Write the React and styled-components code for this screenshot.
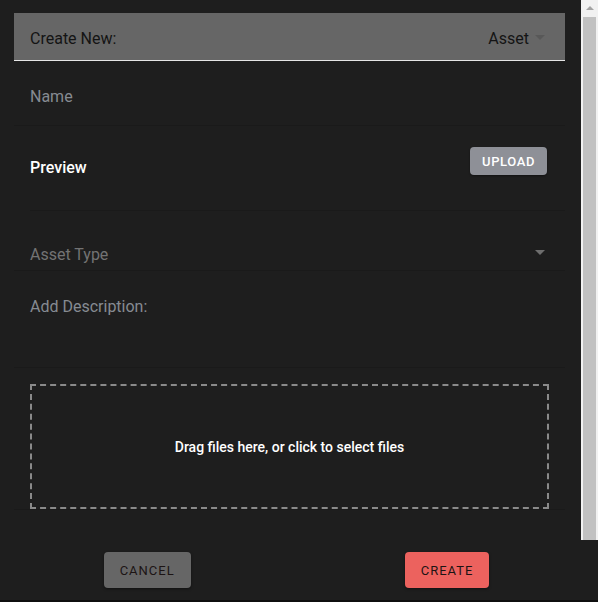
import React from 'react'
import styled, { createGlobalStyle } from 'styled-components'

const GlobalStyle = createGlobalStyle`
  html, body {
    margin: 0;
    padding: 0;
    background: #0f0f0f;
  }
  * { box-sizing: border-box; }
`

const Page = styled.div`
  width: 598px;
  height: 600px;
  display: flex;
  flex-direction: column;
  background: #1e1e1e;
  font-family: Roboto, "Liberation Sans", sans-serif;
`

const Body = styled.div`
  height: 540px;
  display: flex;
  overflow: hidden;
`

const Content = styled.div`
  width: 581px;
  padding: 13px 16px 0 14px;
`

// headless browser hides real scrollbars, so the bar is drawn by hand
const ScrollBar = styled.div`
  width: 17px;
  display: flex;
  flex-direction: column;
  background: #f1f1f1;
`

const ScrollUp = styled.div`
  height: 17px;
  display: flex;
  align-items: center;
  justify-content: center;
`

const ScrollArrow = styled.span`
  width: 0;
  height: 0;
  border-left: 4px solid transparent;
  border-right: 4px solid transparent;
  border-bottom: 4px solid #a3a3a3;
  margin-top: -1px;
`

const Thumb = styled.div`
  flex: 1;
  margin: 0 2px;
  background: #c1c1c1;
`

const Header = styled.div`
  height: 48px;
  padding: 4px 20px 0 16px;
  display: flex;
  align-items: center;
  justify-content: space-between;
  background: #666666;
  border-bottom: 1px solid #e6e6e6;
  font-size: 16px;
  color: #141414;
`

const Picker = styled.div`
  display: flex;
  align-items: center;
  gap: 6px;
`

const Caret = styled.span`
  width: 0;
  height: 0;
  border-left: 5px solid transparent;
  border-right: 5px solid transparent;
  border-top: 5px solid ${p => p.color || '#555'};
  margin-top: ${p => p.offset || 0}px;
`

const Field = styled.div`
  display: flex;
  align-items: flex-start;
  justify-content: space-between;
  height: ${p => p.height}px;
  padding: ${p => p.top}px 20px 0 16px;
  border-bottom: 1px solid #1a1a1a;
`

const Label = styled.span`
  font-size: 16px;
  line-height: 20px;
  color: ${p => p.color || '#868b92'};
`

const PreviewRow = styled.div`
  display: flex;
  align-items: flex-start;
  justify-content: space-between;
  height: 85px;
  margin-left: 16px;
  padding-right: 18px;
  border-bottom: 1px solid #1a1a1a;
`

const PreviewTitle = styled.span`
  margin-top: 32px;
  font-size: 16px;
  font-weight: 500;
  line-height: 20px;
  color: #ffffff;
`

const UploadButton = styled.button`
  margin-top: 21px;
  height: 28px;
  padding: 0 12px;
  border: 0;
  border-radius: 4px;
  background: #8e9097;
  color: #ffffff;
  font-family: inherit;
  font-size: 13px;
  font-weight: 500;
  letter-spacing: 0.6px;
  box-shadow: 0 1px 2px rgba(0, 0, 0, 0.4);
`

const DropWrap = styled.div`
  padding: 16px 16px 0 16px;
  border-bottom: 1px solid #1a1a1a;
`

const DropZone = styled.div`
  height: 125px;
  border: 2px dashed #8a8a8a;
  display: flex;
  align-items: center;
  justify-content: center;
  color: #ffffff;
  font-size: 14px;
  font-weight: 500;
`

const Footer = styled.div`
  height: 60px;
  display: flex;
  align-items: center;
  justify-content: center;
  gap: 214px;
  padding-right: 5px;
`

const ActionButton = styled.button`
  height: 36px;
  padding: 0 16px;
  border: 0;
  border-radius: 4px;
  background: ${p => p.bg};
  color: #1c1414;
  font-family: inherit;
  font-size: 13px;
  letter-spacing: 1px;
  box-shadow: 0 1px 3px rgba(0, 0, 0, 0.45);
`

export default function App () {
  return (
    <Page>
      <GlobalStyle />
      <Body>
        <Content>
          <Header>
            <span>Create New:</span>
            <Picker>
              <span>Asset</span>
              <Caret color='#585858' offset={-2} />
            </Picker>
          </Header>
          <Field height={65} top={26}>
            <Label>Name</Label>
          </Field>
          <PreviewRow>
            <PreviewTitle>Preview</PreviewTitle>
            <UploadButton>UPLOAD</UploadButton>
          </PreviewRow>
          <Field height={60} top={34}>
            <Label color='#737373'>Asset Type</Label>
            <Caret color='#6e6e6e' offset={5} />
          </Field>
          <Field height={97} top={26}>
            <Label>Add Description:</Label>
          </Field>
          <DropWrap>
            <DropZone>Drag files here, or click to select files</DropZone>
          </DropWrap>
        </Content>
        <ScrollBar>
          <ScrollUp><ScrollArrow /></ScrollUp>
          <Thumb />
        </ScrollBar>
      </Body>
      <Footer>
        <ActionButton bg='#666666'>CANCEL</ActionButton>
        <ActionButton bg='#ec625e'>CREATE</ActionButton>
      </Footer>
    </Page>
  )
}
